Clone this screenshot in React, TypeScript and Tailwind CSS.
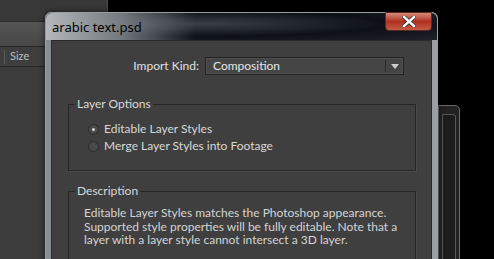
export default function App() {
  const font = { fontFamily: 'Lato, "Open Sans", sans-serif' }

  return (
    <div
      className="relative w-[494px] h-[259px] overflow-hidden bg-black text-[12px] text-[#d8d8d8]"
      style={font}
    >
      {/* app panel behind the dialog */}
      <div className="absolute left-0 top-0 w-[108px] h-full flex flex-col bg-[#3b3b3b] border-r border-[#4a4a4a]">
        <div className="h-[22px] bg-[#383838] border-b border-[#2a2a2a]" />
        <div className="h-[25px] bg-gradient-to-b from-[#555] to-[#474747] border-b border-[#262626]" />
        <div className="h-[20px] flex items-center bg-[#3e3e3e] border-b border-[#262626] text-[11px] text-[#bdbdbd]">
          <div className="w-px h-[14px] ml-[4px] bg-[#5a5a5a]" />
          <span className="ml-[5px]">Size</span>
        </div>
        <div className="flex-1 bg-[#3c3c3c]" />
      </div>

      {/* second window behind, peeking out on the right */}
      <div className="absolute left-[438px] top-[105px] w-[22px] h-[170px] rounded-tr-[5px] border border-[#6a6a6a] bg-[#222] p-[3px] pt-[8px]">
        <div className="h-full border border-[#5a5a5a] rounded-tr-[3px] bg-[#1c1c1c]" />
      </div>

      {/* dialog window */}
      <div className="absolute left-[45px] top-[12px] w-[393px] h-[260px] flex flex-col rounded-t-[6px] border border-[#9a9ea4] bg-gradient-to-r from-[#8a8f94] via-[#3a3f46] to-[#9aa0a6] px-[5px] shadow-[0_0_6px_rgba(0,0,0,0.6)]">
        {/* title bar */}
        <div className="relative h-[27px] flex items-start">
          <div className="absolute inset-x-[-5px] top-0 h-[27px] rounded-t-[6px] bg-[radial-gradient(ellipse_at_40%_40%,#3a3f46_0%,#0d1117_55%,#1e2228_100%)]" />
          <div className="absolute left-[-5px] top-0 w-[150px] h-[27px] rounded-tl-[6px] bg-gradient-to-r from-[#b4b8bc] via-[#8c9196]/80 to-transparent" />
          <span className="relative mt-[5px] ml-[1px] text-[13px] text-black" style={{ fontFamily: '"Noto Sans", "Open Sans", sans-serif' }}>
            arabic text.psd
          </span>
          <div className="absolute right-[0px] top-[-1px] w-[47px] h-[19px] rounded-b-[4px] border border-[#5a2a26] bg-gradient-to-b from-[#d48a7c] via-[#b0301f] to-[#c25a44] flex items-center justify-center">
            <svg width="14" height="11" viewBox="0 0 14 11">
              <path d="M2 1 L12 10 M12 1 L2 10" stroke="#333" strokeWidth="4" strokeLinecap="square" />
              <path d="M2 1 L12 10 M12 1 L2 10" stroke="#fff" strokeWidth="2.4" strokeLinecap="square" />
            </svg>
          </div>
        </div>

        {/* content */}
        <div className="flex-1 flex flex-col border border-[#2a2a2a] bg-[#3f3f3f] pl-[16px] pr-[15px]">
          <div className="flex items-center mt-[16px] h-[18px]">
            <span className="w-[131px] text-right text-[#e0e0e0]">Import Kind:</span>
            <div className="ml-[6px] w-[199px] h-[18px] flex items-center border border-[#222] bg-[#454545] shadow-[inset_0_0_0_1px_#4f4f4f]">
              <span className="flex-1 pl-[7px] text-[#e6e6e6] leading-none">Composition</span>
              <div className="w-px h-[12px] bg-[#2c2c2c]" />
              <div className="w-[17px] flex items-center justify-center">
                <svg width="8" height="5" viewBox="0 0 8 5">
                  <path d="M0 0 H8 L4 5 Z" fill="#cfcfcf" />
                </svg>
              </div>
            </div>
          </div>

          {/* Layer Options */}
          <div className="relative mt-[29px] h-[67px] border border-[#262626] shadow-[1px_1px_0_#4a4a4a]">
            <span className="absolute left-[6px] top-[-9px] px-[2px] bg-[#3f3f3f] leading-[16px]">Layer Options</span>
            <div className="flex flex-col gap-[3px] pl-[19px] pt-[17px]">
              <div className="flex items-center gap-[5px] h-[14px]">
                <div className="w-[11px] h-[11px] rounded-full border border-[#2a2a2a] bg-[#4a4a4a] flex items-center justify-center">
                  <div className="w-[3px] h-[3px] rounded-full bg-[#d8d8d8]" />
                </div>
                <span>Editable Layer Styles</span>
              </div>
              <div className="flex items-center gap-[5px] h-[14px]">
                <div className="w-[11px] h-[11px] rounded-full border border-[#2a2a2a] bg-[#4a4a4a]" />
                <span>Merge Layer Styles into Footage</span>
              </div>
            </div>
          </div>

          {/* Description */}
          <div className="relative mt-[20px] flex-1 border border-[#262626] shadow-[1px_1px_0_#4a4a4a]">
            <span className="absolute left-[6px] top-[-9px] px-[2px] bg-[#3f3f3f] leading-[16px]">Description</span>
            <p className="pl-[15px] pt-[14px] w-[336px] leading-[13.5px] text-[#d4d4d4]">
              Editable Layer Styles matches the Photoshop appearance. Supported style properties will be fully editable. Note that a layer with a layer style cannot intersect a 3D layer.
            </p>
          </div>
        </div>
      </div>
    </div>
  )
}
